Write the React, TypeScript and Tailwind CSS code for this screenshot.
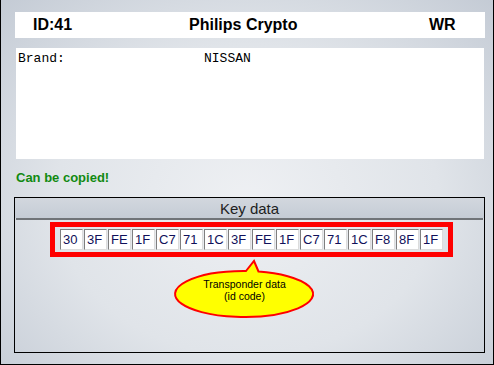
import React from 'react';

const bytes = ['30', '3F', 'FE', '1F', 'C7', '71', '1C', '3F', 'FE', '1F', 'C7', '71', '1C', 'F8', '8F', '1F'];

const ByteCell: React.FC<{ value: string }> = ({ value }) => (
  <div className="w-[23px] h-[21px] mr-[1px] bg-white border border-t-[#7f7f7f] border-l-[#7f7f7f] border-b-[#dcdcdc] border-r-[#dcdcdc] flex items-center pl-[2px] text-[13px] leading-none text-[#10105a]">
    {value}
  </div>
);

const Callout: React.FC = () => (
  <svg width="146" height="62" viewBox="172 258 146 62" className="block ml-[158px] mt-[1px]">
    <path
      d="M245 271 L253 261 L257.5 271.5 A69 23 0 1 1 245 271 Z"
      fill="#ffff00"
      stroke="#ff0000"
      strokeWidth="2"
    />
    <text x="243.5" y="288" textAnchor="middle" fontSize="10.5" fontFamily="'Liberation Sans', Arial, sans-serif" fill="#000">
      Transponder data
    </text>
    <text x="243.5" y="300" textAnchor="middle" fontSize="10.5" fontFamily="'Liberation Sans', Arial, sans-serif" fill="#000">
      (id code)
    </text>
  </svg>
);

export default function App() {
  return (
    <div
      className="w-[494px] h-[365px] border-l border-r border-b border-black overflow-hidden flex flex-col bg-[radial-gradient(ellipse_at_50%_55%,#eef0f3_0%,#e0e4e9_55%,#c4cbd5_100%)]"
      style={{ fontFamily: "'Liberation Sans', Arial, sans-serif" }}
    >
      {/* header */}
      <div className="ml-[14px] mt-[12px] w-[470px] h-[26px] bg-white flex items-center text-[16px] font-bold text-black leading-none">
        <span className="ml-[18px] w-[156px]">ID:41</span>
        <span className="w-[240px]">Philips Crypto</span>
        <span>WR</span>
      </div>

      {/* info box */}
      <div
        className="ml-[15px] mt-[10px] w-[468px] h-[111px] bg-white pl-[2px] pt-[3px] flex text-[13px] leading-[15px] text-black"
        style={{ fontFamily: "'Liberation Mono', 'Courier New', monospace" }}
      >
        <span className="w-[186px]">Brand:</span>
        <span>NISSAN</span>
      </div>

      <div className="ml-[15px] mt-[11px] text-[13px] font-bold leading-[15px] text-[#118a11]">Can be copied!</div>

      {/* key data */}
      <div className="ml-[13px] mt-[12px] w-[471px] h-[156px] border border-black flex flex-col">
        <div className="h-[20px] bg-[linear-gradient(to_bottom,#d2d7de,#c5ccd5)] flex items-center justify-center text-[15px] leading-none text-[#1e1e1e]">
          Key data
        </div>
        <div className="mx-[1px] h-[2px] bg-[#707478]" />
        <div className="ml-[35px] mt-[2px] w-[403px] h-[35px] border-[5px] border-[#ff0000] flex items-start pl-[5px] pt-[2px]">
          {bytes.map((b, i) => (
            <ByteCell key={i} value={b} />
          ))}
        </div>
        <Callout />
      </div>
    </div>
  );
}
